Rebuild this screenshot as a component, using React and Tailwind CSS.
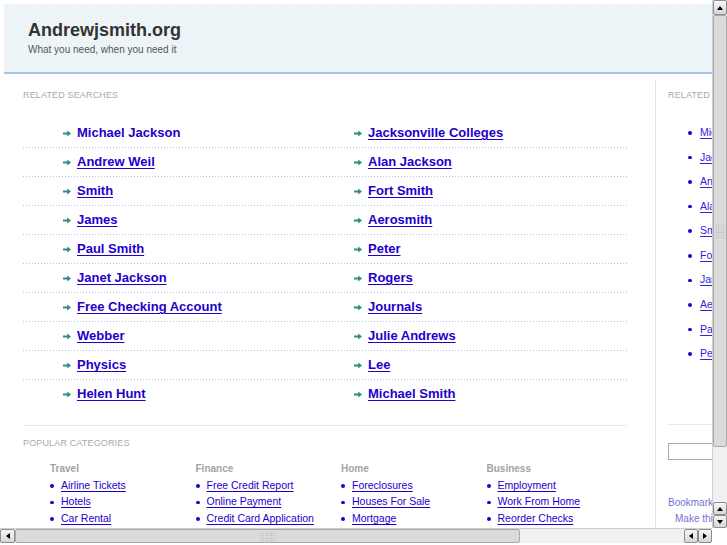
import React from "react";

const searches = [
  ["Michael Jackson", "Jacksonville Colleges"],
  ["Andrew Weil", "Alan Jackson"],
  ["Smith", "Fort Smith"],
  ["James", "Aerosmith"],
  ["Paul Smith", "Peter"],
  ["Janet Jackson", "Rogers"],
  ["Free Checking Account", "Journals"],
  ["Webber", "Julie Andrews"],
  ["Physics", "Lee"],
  ["Helen Hunt", "Michael Smith"],
];

const sideLinks = [
  "Michael Jackson",
  "Jacksonville Colleges",
  "Andrew Weil",
  "Alan Jackson",
  "Smith",
  "Fort Smith",
  "James",
  "Aerosmith",
  "Paul Smith",
  "Peter",
];

const categories = [
  { title: "Travel", items: ["Airline Tickets", "Hotels", "Car Rental"] },
  { title: "Finance", items: ["Free Credit Report", "Online Payment", "Credit Card Application"] },
  { title: "Home", items: ["Foreclosures", "Houses For Sale", "Mortgage"] },
  { title: "Business", items: ["Employment", "Work From Home", "Reorder Checks"] },
];

const Arrow = () => (
  <svg width="8" height="7" viewBox="0 0 8 7" className="shrink-0">
    <path d="M0 2.6h4.2V0.4L8 3.5 4.2 6.6V4.4H0z" fill="#2f8a84" />
  </svg>
);

const Bullet = ({ color = "#2200cc" }) => (
  <span className="w-[4px] h-[3.5px] rounded-full shrink-0" style={{ background: color }} />
);

const Up = () => <span className="w-0 h-0 border-x-[3px] border-x-transparent border-b-[4px] border-b-black" />;
const Down = () => <span className="w-0 h-0 border-x-[3px] border-x-transparent border-t-[4px] border-t-black" />;
const Left = () => <span className="w-0 h-0 border-y-[3px] border-y-transparent border-r-[4px] border-r-black" />;
const Right = () => <span className="w-0 h-0 border-y-[3px] border-y-transparent border-l-[4px] border-l-black" />;

const Btn = ({ children, className = "" }) => (
  <div className={`flex items-center justify-center bg-gradient-to-b from-[#f7f7f7] to-[#d6d6d6] border border-[#8e8e8e] rounded-[2px] ${className}`}>
    {children}
  </div>
);

const Grip = ({ className = "" }) => (
  <div className={`bg-[radial-gradient(circle,#9c9c9c_0.7px,transparent_0.8px)] bg-[length:2.5px_2.5px] ${className}`} />
);

const Dotted = () => (
  <div className="h-px bg-[linear-gradient(to_right,#aac6ec_1px,transparent_1px)] bg-[length:3px_1px] bg-repeat-x" />
);

const App = () => {
  return (
    <div className="w-[727px] h-[545px] bg-white flex flex-col overflow-hidden font-['Liberation_Sans',Arial,sans-serif]">
      <div className="flex h-[528px]">
        {/* page viewport */}
        <div className="w-[712px] h-full overflow-hidden">
          <div className="w-[900px] pt-[4px]">
            <header className="ml-[4px] h-[70px] bg-[#eef5f8] bg-[radial-gradient(circle,#e2ecf1_0.6px,transparent_0.7px)] bg-[length:5px_5px] border-b-2 border-[#a9c4e8] pl-[24px] pt-[15px]">
              <h1 className="text-[18px] leading-[22px] font-bold text-[#333]">Andrewjsmith.org</h1>
              <p className="mt-[2px] text-[10px] leading-[14px] text-[#555]">What you need, when you need it</p>
            </header>

            <div className="flex mt-[6px]">
              {/* main column */}
              <div className="w-[655px] shrink-0 pl-[23px] pr-[28px] pt-[9px]">
                <h2 className="text-[9px] leading-[12px] tracking-[0.15px] text-[#aaa] uppercase">Related Searches</h2>
                <div className="mt-[18px]">
                  {searches.map((row, i) => (
                    <div key={i}>
                      <div className="h-[28px] flex items-center pl-[40px]">
                        {row.map((s, j) => (
                          <div key={s} className="w-[291px] shrink-0 flex items-center gap-[6px]">
                            <Arrow />
                            <a
                              href="#"
                              className={`text-[13px] font-bold text-[#2200cc] ${i === 0 && j === 0 ? "" : "underline underline-offset-2"}`}
                            >
                              {s}
                            </a>
                          </div>
                        ))}
                      </div>
                      {i < searches.length - 1 ? <Dotted /> : <div className="h-px" />}
                    </div>
                  ))}
                </div>

                <div className="mt-[16px] h-px bg-[#e2eaf3]" />
                <h2 className="mt-[11px] text-[9px] leading-[12px] tracking-[0.15px] text-[#aaa] uppercase">Popular Categories</h2>
                <div className="mt-[13px] pl-[27px] flex">
                  {categories.map((c) => (
                    <div key={c.title} className="w-[145.5px] shrink-0">
                      <h3 className="text-[10px] leading-[14px] font-bold text-[#a3a3a3]">{c.title}</h3>
                      <ul className="mt-[1.5px]">
                        {c.items.map((it) => (
                          <li key={it} className="h-[16.5px] flex items-center gap-[7px]">
                            <Bullet />
                            <a href="#" className="text-[10.5px] text-[#2200cc] underline underline-offset-2">
                              {it}
                            </a>
                          </li>
                        ))}
                      </ul>
                    </div>
                  ))}
                </div>
              </div>

              {/* sidebar */}
              <div className="flex-1 border-l border-[#d9e3f2] pl-[12px] pt-[9px] pb-[40px]">
                <h2 className="text-[9px] leading-[12px] tracking-[0.15px] text-[#aaa] uppercase">Related Searches</h2>
                <ul className="mt-[19.5px] pl-[20px]">
                  {sideLinks.map((s) => (
                    <li key={s} className="h-[24.6px] flex items-center gap-[8px]">
                      <Bullet />
                      <a href="#" className="text-[10.5px] text-[#3322dd] underline underline-offset-2">
                        {s}
                      </a>
                    </li>
                  ))}
                </ul>
                <div className="mt-[58px] h-px bg-[#e2eaf3]" />
                <input className="mt-[18px] block h-[17px] w-[140px] border border-[#aaa] bg-white" />
                <p className="mt-[37px] text-[10px] leading-[12px] text-[#7373d6]">Bookmark this page</p>
                <p className="mt-[4px] pl-[7px] text-[10px] leading-[12px] text-[#7373d6]">Make this your homepage</p>
              </div>
            </div>
          </div>
        </div>

        {/* vertical scrollbar */}
        <div className="w-[15px] h-full flex flex-col bg-[#eeeeee] border-l border-[#cfcfcf]">
          <Btn className="h-[15px]">
            <Up />
          </Btn>
          <div className="h-[432px] bg-[#dadada] border border-[#a9a9a9] rounded-[2px] flex items-center justify-center">
            <Grip className="w-[10px] h-[14px]" />
          </div>
          <div className="flex-1 bg-[#f1f1f1]" />
          <Btn className="h-[13px]">
            <Up />
          </Btn>
          <Btn className="h-[13px]">
            <Down />
          </Btn>
        </div>
      </div>

      {/* horizontal scrollbar */}
      <div className="flex h-[15px]">
        <div className="w-[712px] flex bg-[#f1f1f1] border-t border-[#cfcfcf]">
          <Btn className="w-[15px]">
            <Left />
          </Btn>
          <div className="w-[505px] bg-[#dadada] border border-[#a9a9a9] rounded-[2px] flex items-center justify-center">
            <Grip className="w-[16px] h-[9px]" />
          </div>
          <div className="flex-1" />
          <Btn className="w-[14px]">
            <Left />
          </Btn>
          <Btn className="w-[14px]">
            <Right />
          </Btn>
        </div>
        <div className="w-[15px] bg-white" />
      </div>
    </div>
  );
};

export default App;
